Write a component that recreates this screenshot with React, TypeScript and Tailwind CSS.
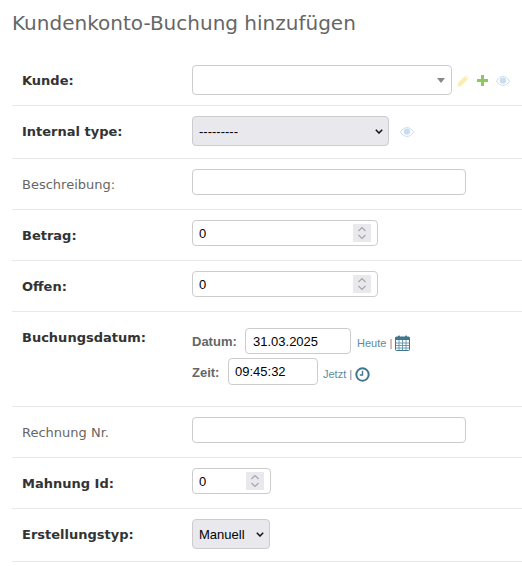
import type { ReactNode } from 'react';

const DEJAVU = "font-['DejaVu_Sans',sans-serif]";
const LIBERATION = "font-['Liberation_Sans',sans-serif]";

function Eye() {
  return (
    <svg width="14" height="10" viewBox="0 0 14 10" className="shrink-0">
      <path d="M0.5 5C2.2 2 4.5 0.6 7 0.6S11.8 2 13.5 5C11.8 8 9.5 9.4 7 9.4S2.2 8 0.5 5Z" fill="none" stroke="#c9dcf2" strokeWidth="1" />
      <circle cx="7" cy="4.6" r="3.2" fill="#c9dcf2" />
    </svg>
  );
}

function Pencil() {
  return (
    <svg width="12" height="12" viewBox="0 0 12 12" className="shrink-0">
      <path d="M0.3 11.7L1 7.8L7.9 0.9L11.1 4.1L4.2 11Z" fill="#fbeeb5" />
      <path d="M8.9 0.4L9.6 0L12 2.4L11.6 3.1Z" fill="#fbeeb5" />
    </svg>
  );
}

function PlusIcon() {
  return (
    <svg width="11" height="11" viewBox="0 0 11 11" className="shrink-0">
      <path d="M4 0H7V4H11V7H7V11H4V7H0V4H4Z" fill="#8cc95c" />
    </svg>
  );
}

function CalendarIcon() {
  return (
    <svg width="15" height="16" viewBox="0 0 15 16" className="shrink-0">
      <rect x="0.5" y="2" width="14" height="13.5" rx="1" fill="#fff" stroke="#417690" />
      <rect x="0.5" y="2" width="14" height="3" fill="#417690" />
      <rect x="3" y="0.5" width="2" height="3" rx="0.8" fill="#417690" />
      <rect x="10" y="0.5" width="2" height="3" rx="0.8" fill="#417690" />
      <path d="M1 8H14M1 10.5H14M1 13H14M4 5V15M7.5 5V15M11 5V15" stroke="#6f9bb2" strokeWidth="1" />
    </svg>
  );
}

function ClockIcon() {
  return (
    <svg width="15" height="15" viewBox="0 0 15 15" className="shrink-0">
      <circle cx="7.5" cy="7.5" r="6.2" fill="#fff" stroke="#417690" strokeWidth="2" />
      <path d="M7.5 3.8V8H4.8" fill="none" stroke="#417690" strokeWidth="1.4" />
    </svg>
  );
}

function Stepper() {
  return (
    <svg width="18" height="18" viewBox="0 0 18 18" className="shrink-0 bg-[#e9e9ed]">
      <path d="M5.5 7L9 3.5L12.5 7M5.5 11L9 14.5L12.5 11" fill="none" stroke="#a5a5ad" strokeWidth="1.2" />
    </svg>
  );
}

function Row({ label, bold, pb, children }: { label: string; bold?: boolean; pb: string; children: ReactNode }) {
  return (
    <div className={`flex border-b border-[#e8e8e8] pt-[10px] ${pb}`}>
      <label className={`h-[30px] w-[180px] shrink-0 pl-[10px] pt-[1px] text-[13px] leading-[30px] ${bold ? 'font-bold text-[#333]' : 'text-[#666]'}`}>
        {label}
      </label>
      {children}
    </div>
  );
}

function NumberBox({ width }: { width: string }) {
  return (
    <div className={`flex h-[26px] items-center justify-between rounded border border-[#ccc] bg-white pl-[6px] pr-[6px] ${width}`}>
      <span className={`${LIBERATION} pt-[1px] text-[13px] text-black`}>0</span>
      <Stepper />
    </div>
  );
}

function TextBox({ value, width, pad, height }: { value?: string; width: string; pad?: string; height?: string }) {
  return (
    <input
      readOnly
      value={value ?? ''}
      className={`${LIBERATION} ${height ?? 'h-[26px]'} rounded border border-[#ccc] bg-white ${pad ?? 'px-[6px]'} text-[13px] text-black outline-none ${width}`}
    />
  );
}

function SelectBox({ value, width }: { value: string; width: string }) {
  return (
    <div className={`relative h-[30px] ${width}`}>
      <select className={`${LIBERATION} h-[30px] w-full appearance-none rounded border border-[#ccc] bg-[#e9e9ed] pl-[6px] pt-[1px] text-[13px] text-black`}>
        <option>{value}</option>
      </select>
      <svg width="8" height="5" viewBox="0 0 8 5" className="pointer-events-none absolute right-[6px] top-[13px]">
        <path d="M0.8 0.8L4 4L7.2 0.8" fill="none" stroke="#111" strokeWidth="1.5" />
      </svg>
    </div>
  );
}

export default function App() {
  return (
    <div className={`${DEJAVU} h-[566px] w-[522px] overflow-hidden bg-white pl-[12px]`}>
      <h1 className="pt-[10px] text-[20px] font-normal leading-[26px] text-[#666]">Kundenkonto-Buchung hinzufügen</h1>
      <div className="mt-[19px]">
        <Row label="Kunde:" bold pb="pb-[10px]">
          <div className="flex h-[30px] items-center">
            <div className="flex h-[30px] w-[260px] items-center justify-end rounded border border-[#ccc] bg-white pr-[6px]">
              <div className="h-0 w-0 border-x-[4px] border-t-[5px] border-x-transparent border-t-[#888]" />
            </div>
            <div className="ml-[5px] flex items-center gap-[8px] pt-[1px]">
              <Pencil />
              <PlusIcon />
              <Eye />
            </div>
          </div>
        </Row>
        <Row label="Internal type:" bold pb="pb-[12px]">
          <div className="flex h-[30px] items-center">
            <SelectBox value="---------" width="w-[197px]" />
            <div className="ml-[11px] pt-[2px]">
              <Eye />
            </div>
          </div>
        </Row>
        <Row label="Beschreibung:" pb="pb-[10px]">
          <TextBox width="w-[274px]" />
        </Row>
        <Row label="Betrag:" bold pb="pb-[10px]">
          <NumberBox width="w-[186px]" />
        </Row>
        <Row label="Offen:" bold pb="pb-[10px]">
          <NumberBox width="w-[186px]" />
        </Row>
        <Row label="Buchungsdatum:" bold pb="pb-[21px]">
          <div className="flex flex-col gap-[4px] pt-[6px]">
            <div className="flex items-center">
              <span className={`${LIBERATION} w-[53px] pt-[1px] text-[13px] font-bold text-[#666]`}>Datum:</span>
              <TextBox value="31.03.2025" width="w-[106px]" pad="px-[7px]" />
              <span className={`${LIBERATION} ml-[6px] pt-[4px] text-[11px] text-[#5a8ca6]`}>Heute |</span>
              <span className="ml-[3px] pt-[3px]">
                <CalendarIcon />
              </span>
            </div>
            <div className="flex items-center">
              <span className={`${LIBERATION} w-[36px] pt-[2px] text-[13px] font-bold text-[#666]`}>Zeit:</span>
              <TextBox value="09:45:32" width="w-[90px]" height="h-[27px]" />
              <span className={`${LIBERATION} ml-[5px] pt-[6px] text-[11px] text-[#5a8ca6]`}>Jetzt |</span>
              <span className="ml-[3px] pt-[6px]">
                <ClockIcon />
              </span>
            </div>
          </div>
        </Row>
        <Row label="Rechnung Nr." pb="pb-[10px]">
          <TextBox width="w-[274px]" />
        </Row>
        <Row label="Mahnung Id:" bold pb="pb-[10px]">
          <NumberBox width="w-[79px]" />
        </Row>
        <Row label="Erstellungstyp:" bold pb="pb-[12px]">
          <SelectBox value="Manuell" width="w-[78px]" />
        </Row>
      </div>
    </div>
  );
}
